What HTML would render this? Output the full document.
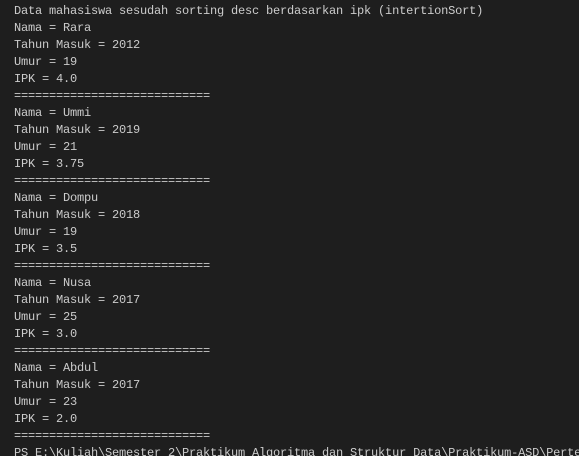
<!DOCTYPE html>
<html><head><meta charset="utf-8"><style>
html,body{margin:0;padding:0;background:#1e1e1e;width:579px;height:456px;overflow:hidden}
pre{margin:0;padding:3px 0 0 14px;width:565px;height:453px;overflow:hidden;font-family:"Liberation Mono","DejaVu Sans Mono",monospace;font-size:12px;letter-spacing:-0.2px;line-height:17px;color:#cccccc;white-space:pre}
</style></head><body><pre>Data mahasiswa sesudah sorting desc berdasarkan ipk (intertionSort)
Nama = Rara
Tahun Masuk = 2012
Umur = 19
IPK = 4.0
============================
Nama = Ummi
Tahun Masuk = 2019
Umur = 21
IPK = 3.75
============================
Nama = Dompu
Tahun Masuk = 2018
Umur = 19
IPK = 3.5
============================
Nama = Nusa
Tahun Masuk = 2017
Umur = 25
IPK = 3.0
============================
Nama = Abdul
Tahun Masuk = 2017
Umur = 23
IPK = 2.0
============================
PS E:\Kuliah\Semester 2\Praktikum Algoritma dan Struktur Data\Praktikum-ASD\Pertemuan</pre></body></html>
